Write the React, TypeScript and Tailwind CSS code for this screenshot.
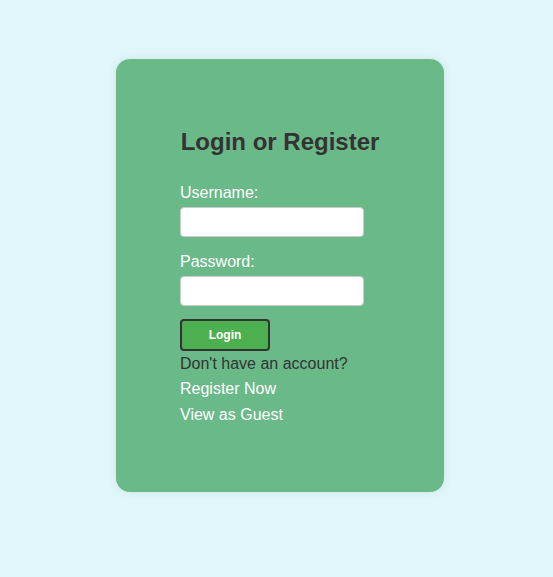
export default function App() {
  return (
    <div className="min-h-[577px] bg-[#e0f6f8] pl-[7px] pt-[59px] font-['Liberation_Sans',Arial,sans-serif]">
      <div className="mx-auto w-[328px] rounded-[14px] bg-[#6ab988] px-16 pb-[67px] pt-[69px] shadow-[0_0_10px_rgba(0,0,0,0.08)]">
        <h2 className="text-center text-[24px] font-bold leading-[28px] text-[#333]">Login or Register</h2>

        <form className="mt-[27px]" onSubmit={(e) => e.preventDefault()}>
          <label className="block text-[16px] leading-[20px] text-white">Username:</label>
          <input
            type="text"
            className="mt-[4px] block h-[30px] w-[184px] rounded-[4px] border border-[#ccc] bg-white px-2 text-sm outline-none"
          />

          <label className="mt-[15px] block text-[16px] leading-[20px] text-white">Password:</label>
          <input
            type="password"
            className="mt-[4px] block h-[30px] w-[184px] rounded-[4px] border border-[#ccc] bg-white px-2 text-sm outline-none"
          />

          <button
            type="submit"
            className="mt-[13px] block h-[32px] w-[90px] rounded-[4px] border-2 border-[#333] bg-[#4caf50] text-[12px] font-bold text-white"
          >
            Login
          </button>
        </form>

        <p className="mt-[3px] text-[16px] leading-[20px] text-[#333]">Don't have an account?</p>
        <a href="#" className="mt-[5px] block text-[16px] leading-[20px] text-white">
          Register Now
        </a>
        <a href="#" className="mt-[6px] block text-[16px] leading-[20px] text-white">
          View as Guest
        </a>
      </div>
    </div>
  );
}
